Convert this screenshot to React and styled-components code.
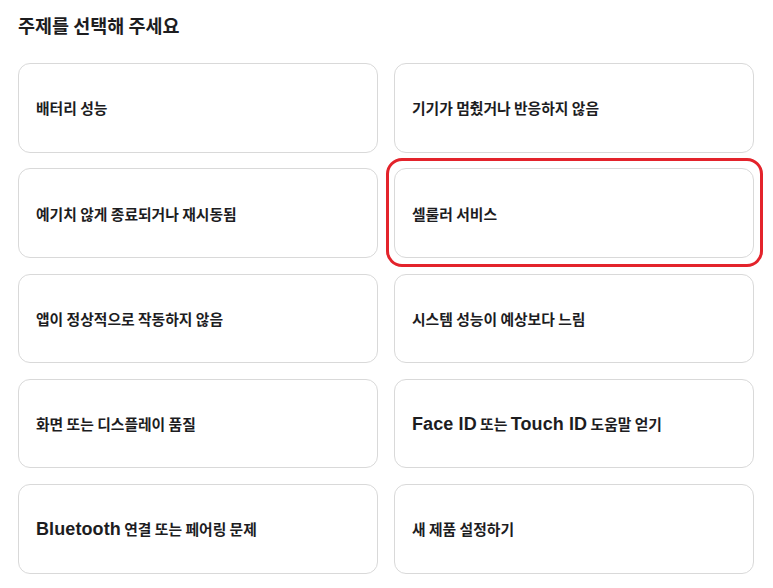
import React from "react";
import styled, { createGlobalStyle } from "styled-components";

const Global = createGlobalStyle`
  html, body { margin: 0; padding: 0; background: #ffffff; }
  body { font-family: "Noto Sans CJK KR", "Noto Sans", sans-serif; color: #1d1d1f; }
`;

const Page = styled.div`
  padding: 12px 19px 0 18px;
  width: 736px;
`;

const Title = styled.h2`
  margin: 0 0 24px 0;
  font-size: 18.5px;
  font-weight: 700;
  line-height: 27px;
  color: #1d1d1f;
`;

const Grid = styled.div`
  display: grid;
  grid-template-columns: 360px 360px;
  grid-auto-rows: 89.5px;
  column-gap: 16px;
  row-gap: 15.75px;
`;

const Card = styled.div`
  position: relative;
  box-sizing: border-box;
  display: flex;
  align-items: center;
  padding: 0 17px;
  border: 1px solid #d9d9d9;
  border-radius: 12px;
  background: #fff;
  font-size: 14.8px;
  font-weight: 700;
  color: #1d1d1f;
`;

const Highlight = styled.div`
  position: absolute;
  left: -9px;
  right: -10px;
  top: -11px;
  bottom: -10px;
  border: 3px solid #e3232b;
  border-radius: 16px;
  pointer-events: none;
`;

const Latin = styled.span`
  font-family: "Liberation Sans", Arial, sans-serif;
  font-size: 18px;
  font-weight: 700;
  letter-spacing: 0.1px;
`;

const topics = [
  { label: "배터리 성능" },
  { label: "기기가 멈췄거나 반응하지 않음" },
  { label: "예기치 않게 종료되거나 재시동됨" },
  { label: "셀룰러 서비스", selected: true },
  { label: "앱이 정상적으로 작동하지 않음" },
  { label: "시스템 성능이 예상보다 느림" },
  { label: "화면 또는 디스플레이 품질" },
  {
    parts: [
      { latin: "Face ID" },
      { text: " 또는 " },
      { latin: "Touch ID" },
      { text: " 도움말 얻기" },
    ],
  },
  { parts: [{ latin: "Bluetooth" }, { text: " 연결 또는 페어링 문제" }] },
  { label: "새 제품 설정하기" },
];

export default function App() {
  return (
    <>
      <Global />
      <Page>
        <Title>주제를 선택해 주세요</Title>
        <Grid>
          {topics.map((t, i) => (
            <Card key={i}>
              <span>
                {t.label
                  ? t.label
                  : t.parts.map((p, j) =>
                      p.latin ? <Latin key={j}>{p.latin}</Latin> : <React.Fragment key={j}>{p.text}</React.Fragment>
                    )}
              </span>
              {t.selected && <Highlight />}
            </Card>
          ))}
        </Grid>
      </Page>
    </>
  );
}
